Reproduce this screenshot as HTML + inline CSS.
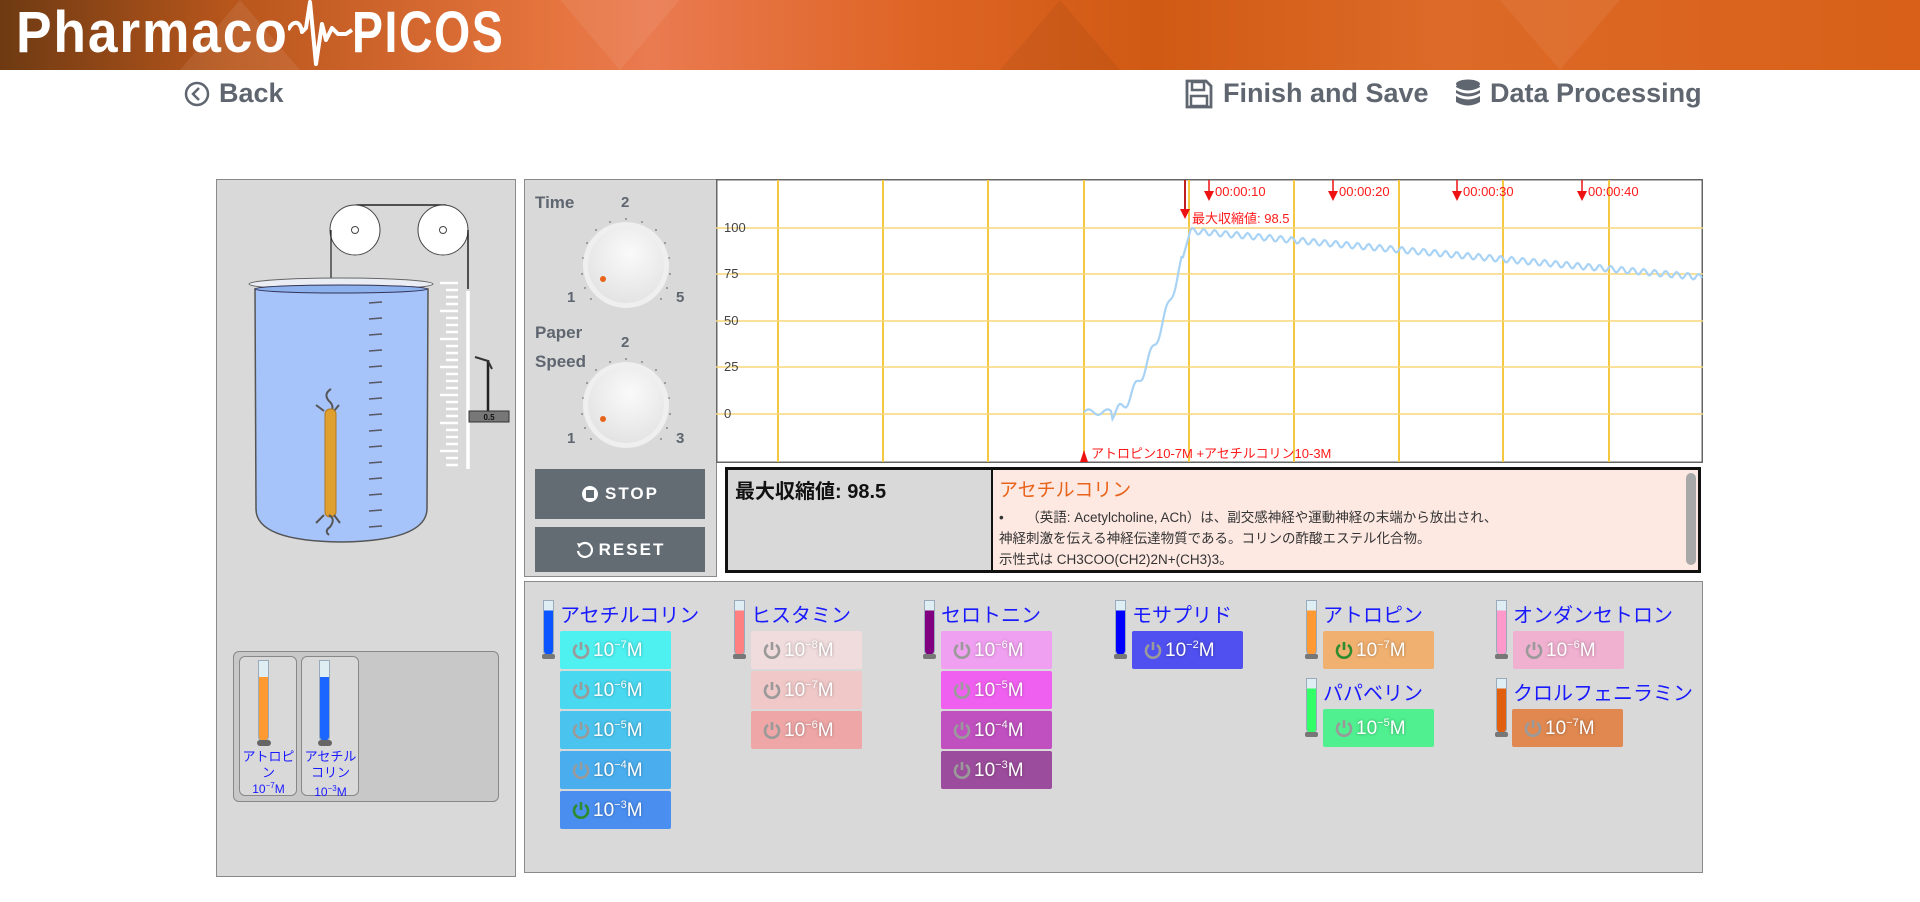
<!DOCTYPE html>
<html><head><meta charset="utf-8">
<style>
*{margin:0;padding:0;box-sizing:border-box}
body{width:1920px;height:902px;overflow:hidden;background:#fff;font-family:"Liberation Sans","Noto Sans CJK JP",sans-serif;position:relative}
.a{position:absolute}
#hdr{left:0;top:0;width:1920px;height:70px;background:linear-gradient(90deg,#6e3a12 0%,#b8561c 12%,#e4733c 28%,#ea7a50 34%,#de6424 48%,#d05a14 60%,#dd6a28 75%,#d86018 100%);overflow:hidden}
.tri{position:absolute;width:0;height:0}
.logo{color:#fff;font-weight:bold;font-size:58px;top:-1px;letter-spacing:2px;transform-origin:0 0;white-space:nowrap}
.nav{color:#5f6670;font-weight:bold;font-size:27px;top:78px;white-space:nowrap}
.panel{background:#d9d9d9;border:1.5px solid #8a8a8a}
.knoblbl{color:#5f6670;font-weight:bold;font-size:17px}
.num{color:#5f6670;font-weight:bold;font-size:15px}
.btn{background:#636b73;color:#fff;font-weight:bold;font-size:17px;letter-spacing:2px;display:flex;align-items:center;justify-content:center;gap:6px}
.lbl{color:#1a1aff;font-size:20px;white-space:nowrap}
.cb{width:111px;height:38px;color:#fff;font-size:19px;display:flex;align-items:center;padding-left:12px;gap:3px;text-shadow:0 0 3px rgba(0,0,0,.35);border-radius:2px}
.cb sup{font-size:11px;vertical-align:8px}
.tube{width:11px;border-radius:0 0 6px 6px;background:#eef4f6;border:1px solid #9ab;overflow:hidden}
.ct{color:#ff1a1a;font-size:13px;white-space:nowrap}
.yl{color:#444;font-size:13px}
</style></head><body>

<div id="hdr" class="a">
 <div class="tri" style="left:180px;top:0;border-left:60px solid transparent;border-right:60px solid transparent;border-bottom:70px solid rgba(255,255,255,.08)"></div>
 <div class="tri" style="left:560px;top:0;border-left:60px solid transparent;border-right:60px solid transparent;border-top:70px solid rgba(255,255,255,.07)"></div>
 <div class="tri" style="left:1000px;top:0;border-left:60px solid transparent;border-right:60px solid transparent;border-bottom:70px solid rgba(0,0,0,.05)"></div>
 <div class="tri" style="left:1500px;top:0;border-left:60px solid transparent;border-right:60px solid transparent;border-top:70px solid rgba(255,255,255,.06)"></div>
 <div class="a logo" style="left:16px;transform:scaleX(.92)">Pharmaco</div>
 <svg class="a" style="left:288px;top:0" width="70" height="70"><path d="M0 30 C5 20 12 20 14 32 L18 28 L22 2 L28 64 L34 24 L38 40 L44 28 L50 34 L58 34 L64 30" fill="none" stroke="#fff" stroke-width="4" stroke-linejoin="round"/></svg>
 <div class="a logo" style="left:352px;transform:scaleX(.8)">PICOS</div>
</div>

<svg class="a" style="left:184px;top:81px" width="26" height="26"><circle cx="13" cy="13" r="11" fill="none" stroke="#5f6670" stroke-width="2.5"/><path d="M15 7 L9 13 L15 19" fill="none" stroke="#5f6670" stroke-width="2.5"/></svg>
<div class="a nav" style="left:219px">Back</div>

<svg class="a" style="left:1185px;top:79px" width="28" height="30"><path d="M2 2 H21 L26 7 V28 H2 Z" fill="none" stroke="#5f6670" stroke-width="2.8"/><rect x="7" y="3" width="12" height="8" fill="none" stroke="#5f6670" stroke-width="2.5"/><rect x="6" y="17" width="16" height="10" fill="none" stroke="#5f6670" stroke-width="2.5"/></svg>
<div class="a nav" style="left:1223px">Finish and Save</div>
<svg class="a" style="left:1455px;top:79px" width="26" height="30"><ellipse cx="13" cy="5" rx="12" ry="4.5" fill="#5f6670"/><path d="M1 8 Q13 15 25 8 V14 Q13 21 1 14Z M1 17 Q13 24 25 17 V23 Q13 30 1 23Z M1 7 V11 Q13 18 25 11 V7" fill="#5f6670"/></svg>
<div class="a nav" style="left:1490px">Data Processing</div>

<!-- left panel -->
<div class="a panel" style="left:216px;top:179px;width:300px;height:698px"></div>
<svg class="a" style="left:216px;top:179px" width="300" height="380">
 <line x1="140" y1="26" x2="230" y2="26" stroke="#222" stroke-width="1.5"/>
 <circle cx="139" cy="51" r="25" fill="#fff" stroke="#444"/><circle cx="139" cy="51" r="3.5" fill="none" stroke="#444"/>
 <circle cx="227" cy="51" r="25" fill="#fff" stroke="#444"/><circle cx="227" cy="51" r="3.5" fill="none" stroke="#444"/>
 <line x1="115" y1="51" x2="115" y2="210" stroke="#222" stroke-width="1.2"/>
 <line x1="252" y1="51" x2="252" y2="110" stroke="#222" stroke-width="1.5"/>
 <path d="M39 110 L40 330 Q40 362 125 363 Q210 362 211 330 L212 110 Z" fill="#a6c4fa" stroke="#555" stroke-width="1.5"/>
 <ellipse cx="125" cy="105" rx="92" ry="6" fill="#eaeef4" stroke="#666"/>
 <ellipse cx="125" cy="110" rx="86" ry="4" fill="#8eb2ee" stroke="#335"/>
 <g stroke="#556" stroke-width="1.5">
  <line x1="153" y1="124" x2="166" y2="123"/><line x1="153" y1="140" x2="166" y2="139"/><line x1="153" y1="156" x2="166" y2="155"/><line x1="153" y1="172" x2="166" y2="171"/><line x1="153" y1="188" x2="166" y2="187"/><line x1="153" y1="204" x2="166" y2="203"/><line x1="153" y1="220" x2="166" y2="219"/><line x1="153" y1="236" x2="166" y2="235"/><line x1="153" y1="252" x2="166" y2="251"/><line x1="153" y1="268" x2="166" y2="267"/><line x1="153" y1="284" x2="166" y2="283"/><line x1="153" y1="300" x2="166" y2="299"/><line x1="153" y1="316" x2="166" y2="315"/><line x1="153" y1="332" x2="166" y2="331"/><line x1="153" y1="348" x2="166" y2="347"/>
 </g>
 <path d="M115 210 Q107 215 113 222 Q120 228 113 236 M108 232 L100 226 M118 232 L123 226" fill="none" stroke="#555" stroke-width="2"/>
 <rect x="109" y="230" width="11" height="108" rx="5" fill="#e0a030" stroke="#b07820"/>
 <path d="M113 336 Q120 340 114 348 Q108 352 113 356 M108 336 L100 344 M118 336 L124 344" fill="none" stroke="#555" stroke-width="2"/>
 <g stroke="#fff" stroke-width="2.5">
  <line x1="224" y1="104" x2="242" y2="104"/><line x1="230" y1="111" x2="242" y2="111"/><line x1="230" y1="118" x2="242" y2="118"/><line x1="230" y1="125" x2="242" y2="125"/><line x1="224" y1="132" x2="242" y2="132"/><line x1="230" y1="139" x2="242" y2="139"/><line x1="230" y1="146" x2="242" y2="146"/><line x1="230" y1="153" x2="242" y2="153"/><line x1="224" y1="160" x2="242" y2="160"/><line x1="230" y1="167" x2="242" y2="167"/><line x1="230" y1="174" x2="242" y2="174"/><line x1="230" y1="181" x2="242" y2="181"/><line x1="224" y1="188" x2="242" y2="188"/><line x1="230" y1="195" x2="242" y2="195"/><line x1="230" y1="202" x2="242" y2="202"/><line x1="230" y1="209" x2="242" y2="209"/><line x1="224" y1="216" x2="242" y2="216"/><line x1="230" y1="223" x2="242" y2="223"/><line x1="230" y1="230" x2="242" y2="230"/><line x1="230" y1="237" x2="242" y2="237"/><line x1="224" y1="244" x2="242" y2="244"/><line x1="230" y1="251" x2="242" y2="251"/><line x1="230" y1="258" x2="242" y2="258"/><line x1="230" y1="265" x2="242" y2="265"/><line x1="224" y1="272" x2="242" y2="272"/><line x1="230" y1="279" x2="242" y2="279"/><line x1="230" y1="286" x2="242" y2="286"/>
 </g>
 <line x1="252" y1="112" x2="252" y2="290" stroke="#fff" stroke-width="3.5"/>
 <line x1="272" y1="181" x2="272" y2="234" stroke="#222" stroke-width="2.5"/>
 <path d="M259 178 L272 182 L276 190" fill="none" stroke="#333" stroke-width="2"/>
 <rect x="253" y="232" width="40" height="11" fill="#777" stroke="#333"/>
 <text x="273" y="241" font-size="8" font-weight="bold" text-anchor="middle" fill="#111">0.5</text>
</svg>
<div class="a" style="left:233px;top:651px;width:266px;height:151px;background:#c8c8c8;border:1px solid #888;border-radius:6px"></div>
<div class="a" style="left:239px;top:656px;width:58px;height:140px;border:1px solid #888;border-radius:6px;background:#d9d9d9"></div>
<div class="a" style="left:301px;top:656px;width:58px;height:140px;border:1px solid #888;border-radius:6px;background:#d9d9d9"></div>
<div class="a tube" style="left:258px;top:660px;height:82px;background:linear-gradient(#dfeef2 0 20%,#ff9a33 20%)"></div>
<div class="a tube" style="left:319px;top:660px;height:82px;background:linear-gradient(#dfeef2 0 20%,#1a66ff 20%)"></div>
<div class="a" style="left:257px;top:740px;width:14px;height:6px;background:#666;border-radius:3px"></div>
<div class="a" style="left:318px;top:740px;width:14px;height:6px;background:#666;border-radius:3px"></div>
<div class="a" style="left:240px;top:749px;width:57px;text-align:center;color:#1a1aff;font-size:13px;line-height:16px">アトロピン<br><span style="font-size:12px;line-height:10px">10<sup style="font-size:8px">−7</sup>M</span></div>
<div class="a" style="left:302px;top:749px;width:57px;text-align:center;color:#1a1aff;font-size:13px;line-height:16px">アセチルコリン<br><span style="font-size:12px">10<sup style="font-size:8px">−3</sup>M</span></div>

<!-- controls -->
<div class="a panel" style="left:524px;top:179px;width:193px;height:398px"></div>
<div class="a knoblbl" style="left:535px;top:193px">Time</div>
<div class="a num" style="left:621px;top:194px">2</div>
<div class="a num" style="left:567px;top:289px">1</div>
<div class="a num" style="left:676px;top:289px">5</div>
<div class="a knoblbl" style="left:535px;top:323px">Paper</div>
<div class="a knoblbl" style="left:535px;top:352px">Speed</div>
<div class="a num" style="left:621px;top:334px">2</div>
<div class="a num" style="left:567px;top:430px">1</div>
<div class="a num" style="left:676px;top:430px">3</div>
<svg class="a" style="left:570px;top:210px" width="114" height="250">
 <defs><radialGradient id="kg" cx=".55" cy=".35" r=".7"><stop offset="0" stop-color="#fafafa"/><stop offset="1" stop-color="#e2e2e2"/></radialGradient></defs>
 <g fill="#888">
  <circle cx="56" cy="9" r="1"/><circle cx="40" cy="12" r="1"/><circle cx="72" cy="12" r="1"/><circle cx="26" cy="20" r="1"/><circle cx="86" cy="20" r="1"/><circle cx="17" cy="33" r="1"/><circle cx="95" cy="33" r="1"/><circle cx="13" cy="48" r="1"/><circle cx="99" cy="48" r="1"/><circle cx="12" cy="64" r="1"/><circle cx="100" cy="64" r="1"/><circle cx="15" cy="78" r="1"/><circle cx="97" cy="78" r="1"/><circle cx="21" cy="89" r="1"/><circle cx="91" cy="89" r="1"/>
 </g>
 <circle cx="56" cy="55" r="43" fill="#efefef"/><circle cx="56" cy="55" r="38" fill="url(#kg)"/>
 <circle cx="33" cy="69" r="3" fill="#e8641a"/>
 <g transform="translate(0,140)">
 <g fill="#888">
  <circle cx="56" cy="9" r="1"/><circle cx="40" cy="12" r="1"/><circle cx="72" cy="12" r="1"/><circle cx="26" cy="20" r="1"/><circle cx="86" cy="20" r="1"/><circle cx="17" cy="33" r="1"/><circle cx="95" cy="33" r="1"/><circle cx="13" cy="48" r="1"/><circle cx="99" cy="48" r="1"/><circle cx="12" cy="64" r="1"/><circle cx="100" cy="64" r="1"/><circle cx="15" cy="78" r="1"/><circle cx="97" cy="78" r="1"/><circle cx="21" cy="89" r="1"/><circle cx="91" cy="89" r="1"/>
 </g>
 <circle cx="56" cy="55" r="43" fill="#efefef"/><circle cx="56" cy="55" r="38" fill="url(#kg)"/>
 <circle cx="33" cy="69" r="3" fill="#e8641a"/>
 </g>
</svg>
<div class="a btn" style="left:535px;top:469px;width:170px;height:50px"><svg width="18" height="18"><circle cx="9" cy="9" r="8" fill="#fff"/><rect x="5" y="5" width="8" height="8" fill="#636b73"/></svg>STOP</div>
<div class="a btn" style="left:535px;top:527px;width:170px;height:45px"><svg width="18" height="18"><path d="M5 4 A7 7 0 1 1 3 10" fill="none" stroke="#fff" stroke-width="2.2"/><path d="M2 2 L7 3 L4 7Z" fill="#fff"/></svg>RESET</div>

<!-- chart -->
<svg class="a" style="left:716px;top:179px" width="987" height="284">
 <rect x="0.75" y="0.75" width="985.5" height="282.5" fill="#fff" stroke="#666" stroke-width="1.5"/>
 <g stroke="#f5c842" stroke-width="2">
  <line x1="62" y1="1" x2="62" y2="283"/><line x1="167" y1="1" x2="167" y2="283"/><line x1="272" y1="1" x2="272" y2="283"/><line x1="368" y1="1" x2="368" y2="283"/><line x1="473" y1="1" x2="473" y2="283"/><line x1="578" y1="1" x2="578" y2="283"/><line x1="683" y1="1" x2="683" y2="283"/><line x1="787" y1="1" x2="787" y2="283"/><line x1="893" y1="1" x2="893" y2="283"/>
 </g>
 <g stroke="#f7d77a" stroke-width="1.5">
  <line x1="0" y1="49" x2="987" y2="49"/><line x1="0" y1="95" x2="987" y2="95"/><line x1="0" y1="142" x2="987" y2="142"/><line x1="0" y1="188" x2="987" y2="188"/><line x1="0" y1="235" x2="987" y2="235"/>
 </g>
 <line x1="469" y1="1" x2="469" y2="31" stroke="#c02020" stroke-width="2"/>
 <polyline id="curve" fill="none" stroke="#a9d3f5" stroke-width="2.2"/>
 <g fill="#ee1111">
  <path d="M364 283 L368 271 L372 283Z"/>
  <path d="M464 30 L474 30 L469 40Z"/>
  <path d="M488 12 L498 12 L493 22Z"/><path d="M612 12 L622 12 L617 22Z"/><path d="M736 12 L746 12 L741 22Z"/><path d="M861 12 L871 12 L866 22Z"/>
 </g>
 <g stroke="#ee1111" stroke-width="1.5"><line x1="493" y1="1" x2="493" y2="13"/><line x1="617" y1="1" x2="617" y2="13"/><line x1="741" y1="1" x2="741" y2="13"/><line x1="866" y1="1" x2="866" y2="13"/></g>
</svg>
<div class="a yl" style="left:724px;top:220px">100</div>
<div class="a yl" style="left:724px;top:266px">75</div>
<div class="a yl" style="left:724px;top:313px">50</div>
<div class="a yl" style="left:724px;top:359px">25</div>
<div class="a yl" style="left:724px;top:406px">0</div>
<div class="a ct" style="left:1215px;top:184px">00:00:10</div>
<div class="a ct" style="left:1339px;top:184px">00:00:20</div>
<div class="a ct" style="left:1463px;top:184px">00:00:30</div>
<div class="a ct" style="left:1588px;top:184px">00:00:40</div>
<div class="a ct" style="left:1192px;top:208px">最大収縮値: 98.5</div>
<div class="a ct" style="left:1091px;top:443px">アトロピン10-7M +アセチルコリン10-3M</div>

<!-- info -->
<div class="a" style="left:725px;top:467px;width:976px;height:106px;border:3px solid #111;background:#fde8e2;overflow:hidden">
 <div class="a" style="left:0;top:0;width:265px;height:100px;background:#d9d9d9;border-right:2px solid #111"></div>
 <div class="a" style="left:7px;top:5px;font-size:20px;font-weight:bold;color:#111">最大収縮値: 98.5</div>
 <div class="a" style="left:271px;top:5px;font-size:19px;color:#e8641a">アセチルコリン</div>
 <div class="a" style="left:271px;top:37px;font-size:13.5px;color:#333;line-height:21px;white-space:nowrap">•&nbsp;&nbsp;&nbsp;&nbsp;&nbsp;&nbsp;（英語: Acetylcholine, ACh）は、副交感神経や運動神経の末端から放出され、<br>神経刺激を伝える神経伝達物質である。コリンの酢酸エステル化合物。<br>示性式は CH3COO(CH2)2N+(CH3)3。</div>
 <div class="a" style="left:958px;top:3px;width:10px;height:92px;border-radius:5px;background:#a8a8a8"></div>
</div>

<!-- bottom panel -->
<div class="a panel" style="left:524px;top:581px;width:1179px;height:292px"></div>
<div id="bp"></div>

<script>
(function(){
 var pts=[];
 function y(v){return 235-1.86*v;}
 for(var X=1084;X<=1702;X+=1.5){
  var x=X-716,v;
  if(X<1112) v=1+1.5*Math.sin((X-1084)/3);
  else if(X<1190){var t=(X-1112)/78; v=98*Math.pow(t,1.6)+ (t<.9?3*Math.sin(X/2.5):0);}
  else v=98.5-25*(X-1190)/512;
  if(X>=1190) v+=1.6*Math.sin((X-1190)/11*2*Math.PI);
  pts.push(x.toFixed(1)+','+y(v).toFixed(1));
 }
 document.getElementById('curve').setAttribute('points',pts.join(' '));
 var pw='<svg width="18" height="20" viewBox="0 0 18 20"><path d="M5 5 A7 7 0 1 0 13 5" fill="none" stroke="COL" stroke-width="2.6"/><line x1="9" y1="2" x2="9" y2="10" stroke="COL" stroke-width="2.6"/></svg>';
 var groups=[
  {x:543,ty:600,lbl:'アセチルコリン',tc:'#0a55ff',btns:[['−7','#4ef0f0'],['−6','#48d8f0'],['−5','#4ac4ee'],['−4','#4aaeee'],['−3','#4a8ef0',1]]},
  {x:734,ty:600,lbl:'ヒスタミン',tc:'#ff8080',btns:[['−8','#f0dcdc'],['−7','#f0c8c8'],['−6','#eea6a6']]},
  {x:924,ty:600,lbl:'セロトニン',tc:'#800080',btns:[['−6','#f0a0f0'],['−5','#f060f0'],['−4','#c050c0'],['−3','#9c4c9c']]},
  {x:1115,ty:600,lbl:'モサプリド',tc:'#0000ff',btns:[['−2','#5050f0']]},
  {x:1306,ty:600,lbl:'アトロピン',tc:'#ff9933',btns:[['−7','#f0b070',1]]},
  {x:1306,ty:678,lbl:'パパベリン',tc:'#33ff66',btns:[['−5','#50f090']]},
  {x:1496,ty:600,lbl:'オンダンセトロン',tc:'#ff99cc',btns:[['−6','#f0b0d0']]},
  {x:1496,ty:678,lbl:'クロルフェニラミン',tc:'#e06010',btns:[['−7','#e08850']]}
 ];
 var h='';
 groups.forEach(function(g){
  h+='<div class="a tube" style="left:'+g.x+'px;top:'+g.ty+'px;height:56px;background:linear-gradient(#dfeef2 0 18%,'+g.tc+' 18%)"></div>';
  h+='<div class="a" style="left:'+(g.x-1)+'px;top:'+(g.ty+54)+'px;width:13px;height:5px;background:#777;border-radius:2px"></div>';
  h+='<div class="a lbl" style="left:'+(g.x+17)+'px;top:'+(g.ty-1)+'px">'+g.lbl+'</div>';
  g.btns.forEach(function(b,i){
   var top=g.ty+31+i*40;
   var bx=g.x+17; if(g.lbl=='クロルフェニラミン') bx=g.x+16;
   h+='<div class="a cb" style="left:'+bx+'px;top:'+top+'px;background:'+b[1]+'">'+pw.replace(/COL/g,b[2]?'#2e8b2e':'#9a9a9a')+'<span>10<sup>'+b[0]+'</sup>M</span></div>';
  });
 });
 document.getElementById('bp').innerHTML=h;
})();
</script>
</body></html>
